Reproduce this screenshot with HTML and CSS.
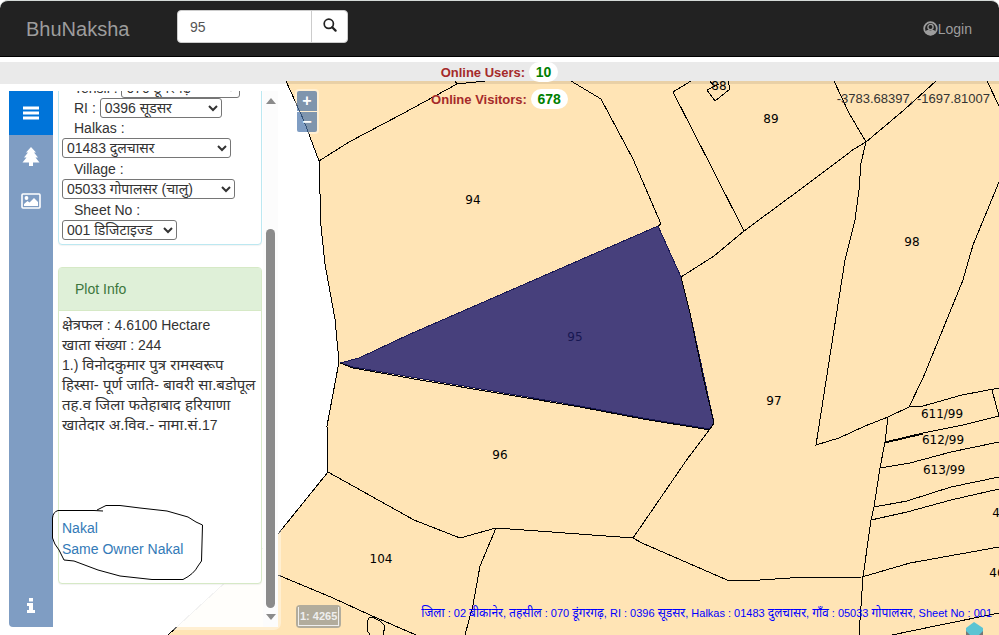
FILE: index.html
```html
<!DOCTYPE html>
<html lang="en">
<head>
<meta charset="utf-8">
<title>BhuNaksha</title>
<link rel="stylesheet" href="styles.css">
</head>
<body>
<div class="app">
  <header class="navbar">
    <a class="brand" href="#">BhuNaksha</a>
    <form class="search">
      <input class="search-input" type="text" value="95" aria-label="Search plot">
      <button class="search-button" type="button" aria-label="Search">
        <svg width="14" height="14" viewBox="0 0 14 14"><circle cx="5.8" cy="5.8" r="4.6" fill="none" stroke="#222" stroke-width="1.7"/><path d="M9.200 9.200L12.600 12.600" stroke="#222" stroke-width="2.200" stroke-linecap="round"/></svg>
      </button>
    </form>
    <a class="login" href="#">
      <svg width="15" height="15" viewBox="0 0 15 15"><circle cx="7.5" cy="7.5" r="6.3" fill="none" stroke="#9d9d9d" stroke-width="1.8"/><circle cx="7.5" cy="6" r="2.600" fill="none" stroke="#9d9d9d" stroke-width="1.300"/><path d="M2 11C3 9.300 4.600 9 5.600 8.700C7 9.600 8 9.600 9.400 8.700C10.400 9 12 9.300 13 11C10.500 15.200 4.500 15.200 2 11Z" fill="#9d9d9d"/></svg>Login</a>
  </header>

  <div class="strip"></div>

  <main class="workspace">
    <svg class="map" viewBox="0 81 999 554" preserveAspectRatio="xMinYMin slice" role="img" aria-label="Plot map">
      <path class="land" d="M286 81L304 121L319 161L321 226L325 264L335 319L339 362L327 426L328 472L278 534L168 635H1010V81Z"/>
      <rect class="land-edge" x="286" y="81" width="720" height="3"/>
      <g class="lines">
        <path d="M286 81L304 121L319 161L321 226L325 264L335 319L339 362L327 426L328 472L278 534L168 635"/>
        <path d="M319 161L349 142L402 114L457 84L485 81M457 84L455 81"/>
        <path d="M571 81L601 99L633 159L661 224L658 226"/>
        <path d="M691 81L673 92L713 170L744 231"/>
        <path d="M834 81L849 113L866 142L904 110L936 81"/>
        <path d="M866 142L854 149L809 183L744 231L714 256L681 277L658 226"/>
        <path d="M866 142L861 163L859 190L855 220L845 260L834 330L816 445L839 438L865 426L888 417L909 407L923 378L963 280L973 245L999 182"/>
        <path d="M987 81L999 106"/>
        <path d="M710 81L713 85M728 81L730 89L715 101L707 90L719 84"/>
        <path d="M909 407L923 406L962 395L999 388M992 390L999 416"/>
        <path d="M888 417L885 442L880 468L874 507L871 520L863 577L859 635"/>
        <path d="M885 442L923 433L963 425L999 416M885 443L923 434"/>
        <path d="M880 468L910 463L951 452L999 442"/>
        <path d="M874 507L907 501L951 487L999 477"/>
        <path d="M871 520L907 512L951 500L999 489"/>
        <path d="M328 472L414 520L460 538L496 528L538 531L633 538L642 543L727 580H760L790 578L862 577L910 563L999 547"/>
        <path d="M496 528L480 566L473 605L465 635"/>
        <path d="M278 575L333 598L370 615L416 635"/>
        <path d="M892 635L940 625L999 613"/>
        <path d="M370 635L367 630V622L369 618L372 617L380 621L385 626L383 635"/>
      </g>
      <path class="selected" d="M340 363L359 358L408 335L658 226L681 277L690 313L714 423L710 429L643 418L580 406L353 367Z"/>
      <path class="lines" d="M681 277L690 313L703 377L714 423L710 429L688 458L633 538M340 363L353 368L420 380L580 407L643 419L710 430"/>
      <g class="labels">
        <text x="473" y="204">94</text>
        <text class="label-selected" x="575" y="341">95</text>
        <text x="500" y="459">96</text>
        <text x="774" y="405">97</text>
        <text x="912" y="246">98</text>
        <text x="771" y="123">89</text>
        <text x="719" y="90">88</text>
        <text x="381" y="563">104</text>
        <text x="942" y="418">611/99</text>
        <text x="943" y="444">612/99</text>
        <text x="944" y="474">613/99</text>
        <text x="996" y="517">4</text>
        <text x="997" y="577">46</text>
      </g>
      <path d="M966 628L974 622L983 628V635H966Z" fill="#5bc4d3"/>
      <path d="M966 631L970 635H966ZM983 631L979 635H983Z" fill="#777"/>
    </svg>

    <div class="zoom">
      <button class="zoom-button" type="button" aria-label="Zoom in">+</button>
      <button class="zoom-button zoom-out" type="button" aria-label="Zoom out">−</button>
    </div>
    <div class="coords">-3783.68397, -1697.81007</div>
    <div class="scale"><div class="scale-value">1: 4265</div></div>
    <div class="location"><span class="hi">जिला</span> : 02 <span class="hi">बीकानेर</span>, <span class="hi">तहसील</span> : 070 <span class="hi">डूंगरगढ़</span>, RI : 0396 <span class="hi">सूडसर</span>, Halkas : 01483 <span class="hi">दुलचासर</span>, <span class="hi">गाँव</span> : 05033 <span class="hi">गोपालसर</span>, Sheet No : 001</div>

    <aside class="sidebar">
      <nav class="tabs">
        <a class="tab tab-active" href="#" aria-label="Menu"><svg width="18" height="14" viewBox="0 0 18 14"><path d="M1 2H17M1 7H17M1 12H17" stroke="#fff" stroke-width="3"/></svg></a>
        <a class="tab" href="#" aria-label="Layers"><svg width="18" height="20" viewBox="0 0 18 20"><path d="M9 0L14 5.500H12L16 10.500H13.500L17.500 15.500H11V19H7V15.500H.5L4.500 10.500H2L6 5.500H4Z" fill="#fff"/></svg></a>
        <a class="tab" href="#" aria-label="Image"><svg width="20" height="16" viewBox="0 0 20 16"><rect x="1" y="1" width="18" height="14" rx="1" fill="none" stroke="#fff" stroke-width="1.600"/><circle cx="5.500" cy="5" r="1.900" fill="#fff"/><path d="M3 13V11L6.500 8L8.500 9.500L13 5L17 9V13Z" fill="#fff"/></svg></a>
        <a class="tab tab-last" href="#" aria-label="Information"><svg width="8" height="15" viewBox="0 0 8 15"><path d="M2 0H6V3.500H2ZM0 5H6V12H8V15H0V12H2V8H0Z" fill="#fff"/></svg></a>
      </nav>
      <div class="content">
        <form class="card card-form">
          <div class="field"><label for="tehsil">Tehsil :</label> <select class="select w-tehsil" id="tehsil"><option>070 डूंगरगढ़</option></select></div>
          <div class="field"><label for="ri">RI :</label> <select class="select w-ri" id="ri"><option>0396 सूडसर</option></select></div>
          <div class="field"><label for="halkas">Halkas :</label></div>
          <select class="select select-row w-halkas" id="halkas"><option>01483 दुलचासर</option></select>
          <div class="field"><label for="village">Village :</label></div>
          <select class="select select-row w-village" id="village"><option>05033 गोपालसर (चालु)</option></select>
          <div class="field"><label for="sheet">Sheet No :</label></div>
          <select class="select select-row w-sheet" id="sheet"><option>001 डिजिटाइज्ड</option></select>
        </form>
        <section class="card card-plot">
          <h2 class="card-title">Plot Info</h2>
          <div class="card-body">
            <p class="info"><span class="hi">क्षेत्रफल</span> : 4.6100 Hectare<br><span class="hi">खाता संख्या</span> : 244<br>1.) <span class="hi">विनोदकुमार पुत्र रामस्वरूप</span><br><span class="hi">हिस्सा- पूर्ण जाति- बावरी सा.बडोपूल</span><br><span class="hi">तह.व जिला फतेहाबाद हरियाणा</span><br><span class="hi">खातेदार अ.विव.- नामा.सं.</span>17</p>
            <div class="links"><a href="#">Nakal</a><a href="#">Same Owner Nakal</a></div>
          </div>
        </section>
      </div>
      <div class="scrollbar">
        <svg width="10" height="6" viewBox="0 0 10 6"><path d="M5 0L10 6H0Z" fill="#8b8b8b"/></svg>
        <div class="thumb"></div>
        <svg width="10" height="6" viewBox="0 0 10 6"><path d="M0 0H10L5 6Z" fill="#8b8b8b"/></svg>
      </div>
      <svg class="scribble" width="153" height="78" viewBox="51 504 153 78"><path d="M103 511L94 510.500H58Q53 512 52.500 518V538Q54 544 59 550L64 560L74 561L98 570L120 576L152 579.500H183Q194 574 198 566L201.500 561L202.500 525L196 522L188 517L167 511L140 508L120 505.500H106L97 510"/></svg>
    </aside>
  </main>

  <div class="counters">
    <div class="counter">Online Users: <span class="count">10</span></div>
    <div class="counter">Online Visitors: <span class="count">678</span></div>
  </div>
</div>
</body>
</html>
```
FILE: styles.css
```css
* {
  box-sizing: border-box;
}

body {
  margin: 0;
  background: #fff;
  color: #333;
  font: 14px/20px "Liberation Sans", "Noto Sans", sans-serif;
}

a {
  color: #337ab7;
  text-decoration: none;
}

.app {
  position: relative;
  display: flex;
  flex-direction: column;
  height: 100vh;
  overflow: hidden;
}

.navbar {
  display: flex;
  flex: none;
  align-items: center;
  height: 57px;
  padding: 0 27px 0 26px;
  background: #222;
  border-top: 1px solid #d5dad8;
  border-bottom: 1px solid #000;
  border-radius: 8px 8px 0 0;
}

.brand {
  width: 151px;
  color: #9d9d9d;
  font-size: 20px;
}

.search {
  display: flex;
  height: 33px;
  margin-bottom: 4px;
}

.search-input {
  width: 135px;
  padding: 0 12px;
  border: 1px solid #ccc;
  border-radius: 4px 0 0 4px;
  color: #555;
  font: inherit;
}

.search-button {
  width: 37px;
  margin-left: -1px;
  padding: 0;
  border: 1px solid #ccc;
  border-radius: 0 4px 4px 0;
  background: #fff;
}

.login {
  display: flex;
  align-items: center;
  margin-left: auto;
  color: #9d9d9d;
}

.strip {
  flex: none;
  height: 19px;
  margin-top: 5px;
  background: #eaeaea;
}

.workspace {
  position: relative;
  flex: 1;
  min-height: 0;
  background: linear-gradient(#eaeaea 3px, #fff 3px);
}

.map {
  display: block;
  width: 100%;
  height: 100%;
}

.land {
  fill: #ffe4b5;
}

.land-edge {
  fill: #e9d0a6;
}

.lines {
  fill: none;
  stroke: #000;
  shape-rendering: crispEdges;
}

.selected {
  fill: #47407c;
  stroke: #171752;
  shape-rendering: crispEdges;
}

.labels {
  fill: #000;
  font: 12px "DejaVu Sans", sans-serif;
  text-anchor: middle;
}

.label-selected {
  fill: #171752;
}

.zoom {
  position: absolute;
  top: 8px;
  left: 295px;
  padding: 2px;
  border-radius: 4px;
  background: rgba(255, 255, 255, 0.4);
}

.zoom-button {
  display: block;
  width: 20px;
  height: 20px;
  padding: 0;
  border: 0;
  border-radius: 2px 2px 0 0;
  background: rgba(0, 60, 136, 0.5);
  color: #fff;
  font: bold 16px/18px "Liberation Sans", sans-serif;
}

.zoom-out {
  margin-top: 1px;
  border-radius: 0 0 2px 2px;
}

.coords {
  position: absolute;
  top: 8px;
  right: 9px;
  font-size: 13px;
}

.scale {
  position: absolute;
  bottom: 7px;
  left: 296px;
  padding: 2px;
  border-radius: 4px;
  background: #b2ac9c;
}

.scale-value {
  padding: 0 1px;
  border: 1px solid #eee;
  border-top: 0;
  color: #eee;
  font-weight: bold;
  font-size: 11px;
  line-height: 18px;
}

.location {
  position: absolute;
  right: 7px;
  bottom: 12px;
  color: #00f;
  font-size: 11px;
  white-space: nowrap;
}

.hi {
  font-size: 15px;
  line-height: 1;
}

.location .hi {
  font-size: 12px;
}

.sidebar {
  position: absolute;
  top: 10px;
  bottom: 8px;
  left: 9px;
  display: flex;
  width: 269px;
  border-radius: 4px;
  background: rgba(255, 255, 255, 0.95);
  box-shadow: 0 0 0 3px rgba(255, 255, 255, 0.4);
}

.tabs {
  display: flex;
  flex: none;
  flex-direction: column;
  width: 44px;
  border-radius: 4px 0 0 4px;
  background: #7f9dc3;
}

.tab {
  display: flex;
  align-items: center;
  justify-content: center;
  height: 44px;
}

.tab-active {
  background: #0074d9;
}

.tab-last {
  margin-top: auto;
}

.content {
  display: flex;
  flex: 1;
  flex-direction: column;
  justify-content: flex-end;
  gap: 22px;
  padding: 0 1px 43px 5px;
  overflow: hidden;
}

.card {
  flex: none;
  border: 1px solid #bce8f1;
  border-radius: 4px;
  background: #fff;
  box-shadow: 0 1px 1px rgba(0, 0, 0, 0.05);
}

.card-form {
  padding: 3px;
}

.field {
  height: 20px;
  padding-left: 12px;
  line-height: 20px;
  white-space: nowrap;
}

.select {
  display: inline-block;
  height: 20px;
  padding: 0;
  border: 1px solid #767676;
  border-radius: 3px;
  background: #fff;
  color: #333;
  font: inherit;
  line-height: 18px;
  vertical-align: top;
}

.select-row {
  display: block;
  margin-bottom: 1px;
}

.w-tehsil {
  width: 119px;
}

.w-ri {
  width: 122px;
}

.w-halkas {
  width: 169px;
}

.w-village {
  width: 173px;
}

.w-sheet {
  width: 115px;
}

.card-plot {
  border-color: #d6e9c6;
}

.card-title {
  margin: 0;
  padding: 11px 16px;
  border-bottom: 1px solid #d6e9c6;
  background: #dff0d8;
  color: #3c763d;
  font-weight: normal;
  font-size: 14px;
}

.card-body {
  padding: 4px 3px;
}

.info {
  min-height: 203px;
  margin: 0;
  white-space: nowrap;
}

.links {
  display: flex;
  flex-direction: column;
  min-height: 61px;
  line-height: 21px;
}

.scrollbar {
  display: flex;
  flex: none;
  flex-direction: column;
  align-items: center;
  width: 15px;
  padding: 7px 0;
  background: #fcfcfc;
}

.thumb {
  flex: 1;
  width: 9px;
  margin: 125px 0 6px;
  border-radius: 5px;
  background: #8b8b8b;
}

.scribble {
  position: absolute;
  bottom: 45px;
  left: 42px;
  fill: none;
  stroke: #000;
}

.counters {
  position: absolute;
  top: 62px;
  left: 0;
  width: 100%;
  color: #a52a2a;
  font-weight: bold;
  font-size: 13px;
  text-align: center;
}

.counter {
  height: 27px;
}

.count {
  display: inline-block;
  padding: 0 7px;
  border-radius: 10px;
  background: #fff;
  color: #008000;
  font-size: 14px;
}
```
